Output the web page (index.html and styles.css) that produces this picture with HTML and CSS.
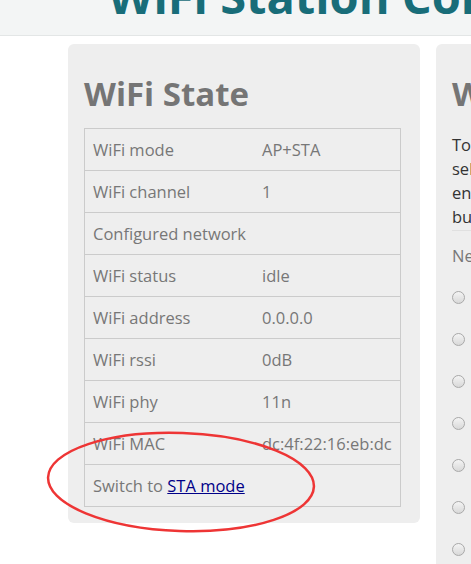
FILE: index.html
```html
<!DOCTYPE html>
<html>
<head>
<meta charset="utf-8">
<title>WiFi Station Configuration</title>
<link rel="stylesheet" href="styles.css">
</head>
<body>
<header class="header">
  <h1 class="title">WiFi Station Configuration</h1>
</header>
<main class="content">
  <section class="card">
    <h2 class="card-title">WiFi State</h2>
    <table class="state-table">
      <tbody>
        <tr><td class="label-cell">WiFi mode</td><td>AP+STA</td></tr>
        <tr><td class="label-cell">WiFi channel</td><td>1</td></tr>
        <tr><td class="label-cell">Configured network</td><td></td></tr>
        <tr><td class="label-cell">WiFi status</td><td>idle</td></tr>
        <tr><td class="label-cell">WiFi address</td><td>0.0.0.0</td></tr>
        <tr><td class="label-cell">WiFi rssi</td><td>0dB</td></tr>
        <tr><td class="label-cell">WiFi phy</td><td>11n</td></tr>
        <tr><td class="label-cell">WiFi MAC</td><td>dc:4f:22:16:eb:dc</td></tr>
        <tr><td colspan="2">Switch to <a class="switch-link" href="#">STA mode</a></td></tr>
      </tbody>
    </table>
  </section>
  <section class="card">
    <h2 class="card-title">WiFi Association</h2>
    <form class="assoc-form">
      <p class="legend">To connect to a WiFi network, please<br>select one of the detected networks,<br>enter the password, and hit the connect<br>button...</p>
      <div class="field-label">Network SSID</div>
      <table class="ap-table">
        <tbody>
          <tr><td><input class="radio" type="radio" name="ssid"></td><td>HomeNet</td></tr>
          <tr><td><input class="radio" type="radio" name="ssid"></td><td>Office-2G</td></tr>
          <tr><td><input class="radio" type="radio" name="ssid"></td><td>TP-LINK_5A21</td></tr>
          <tr><td><input class="radio" type="radio" name="ssid"></td><td>ChinaNet-x7Kq</td></tr>
          <tr><td><input class="radio" type="radio" name="ssid"></td><td>Guest</td></tr>
          <tr><td><input class="radio" type="radio" name="ssid"></td><td>MERCURY_88</td></tr>
          <tr><td><input class="radio" type="radio" name="ssid"></td><td>Tenda_3F</td></tr>
        </tbody>
      </table>
    </form>
  </section>
</main>
<svg class="annotation" width="471" height="564" viewBox="0 0 471 564">
  <ellipse cx="181" cy="482" rx="133" ry="49" transform="rotate(2 181 482)" fill="none" stroke="#ee3535" stroke-width="2.5"/>
</svg>
</body>
</html>
```
FILE: styles.css
```css
html, body {
  margin: 0;
  padding: 0;
}
body {
  width: 471px;
  height: 564px;
  overflow: hidden;
  position: relative;
  font-family: "Open Sans", "Liberation Sans", sans-serif;
  color: #777;
  background: #fff;
}
.header {
  height: 35px;
  background: #f3f5f5;
  border-bottom: 1px solid #e3e6e6;
  overflow: hidden;
  padding-left: 108px;
}
.title {
  margin: -28px 0 0 0;
  font-size: 47px;
  line-height: 48px;
  font-weight: 700;
  color: #186d79;
  white-space: nowrap;
}
.content {
  display: flex;
  align-items: flex-start;
  gap: 16px;
  padding: 8px 0 0 68px;
}
.card {
  flex: 0 0 352px;
  box-sizing: border-box;
  background: #eeeeee;
  border-radius: 6px;
  padding: 30px 16px 16px 16px;
}
.card-title {
  margin: 0 0 14px 0;
  font-size: 33px;
  line-height: 40px;
  font-weight: 700;
  color: #757575;
  white-space: nowrap;
}
.state-table {
  border-collapse: collapse;
  width: 315px;
  border: 1px solid #cbcbcb;
  font-size: 16.5px;
}
.state-table td {
  padding: 8px 8px 8px 8px;
  line-height: 25px;
  border-bottom: 1px solid #cbcbcb;
  white-space: nowrap;
  text-align: left;
}
.state-table .label-cell {
  width: 153px;
}
.switch-link {
  color: #000088;
  text-decoration: underline;
}
.assoc-form {
  margin: 0;
}
.legend {
  margin: 0;
  padding: 5px 0 1px 0;
  border-bottom: 1px solid #e0e0e0;
  font-size: 16.5px;
  line-height: 24px;
  color: #333;
  white-space: nowrap;
}
.field-label {
  margin-top: 13px;
  font-size: 16.5px;
  line-height: 24px;
  color: #777;
}
.ap-table {
  border-collapse: collapse;
  margin-top: 8px;
  font-size: 16.5px;
  color: #777;
}
.ap-table td {
  padding: 0 8px 0 0;
  height: 42px;
  vertical-align: middle;
}
.radio {
  appearance: none;
  -webkit-appearance: none;
  display: block;
  margin: 0;
  width: 13px;
  height: 13px;
  border-radius: 50%;
  border: 1px solid #a9a9a9;
  box-sizing: border-box;
  background: linear-gradient(#f4f4f4, #d8d8d8);
}
.annotation {
  position: absolute;
  left: 0;
  top: 0;
  pointer-events: none;
}
```
